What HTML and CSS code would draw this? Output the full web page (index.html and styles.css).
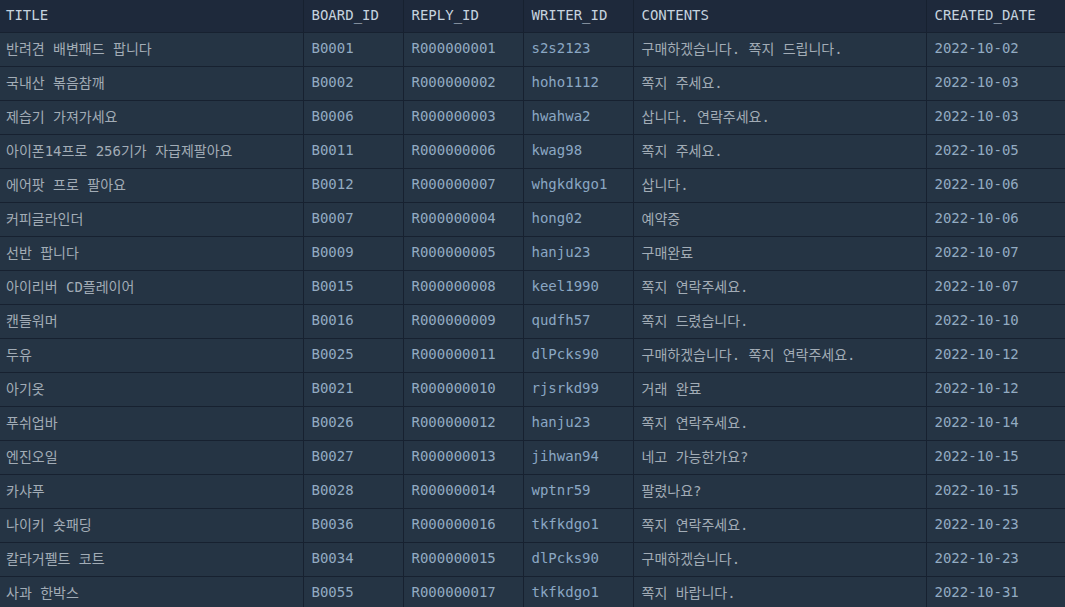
FILE: index.html
```html
<!DOCTYPE html>
<html lang="ko">
<head>
<meta charset="utf-8">
<title>Reply table</title>
<link rel="stylesheet" href="styles.css">
</head>
<body>
<table class="grid">
  <colgroup>
    <col class="c-title"><col class="c-board"><col class="c-reply"><col class="c-writer"><col class="c-contents"><col class="c-date">
  </colgroup>
  <thead>
    <tr><th>TITLE</th><th>BOARD_ID</th><th>REPLY_ID</th><th>WRITER_ID</th><th>CONTENTS</th><th>CREATED_DATE</th></tr>
  </thead>
  <tbody>
    <tr><td class="ko">반려견 배변패드 팝니다</td><td>B0001</td><td>R000000001</td><td class="w">s2s2123</td><td class="ko">구매하겠습니다. 쪽지 드립니다.</td><td>2022-10-02</td></tr>
    <tr><td class="ko">국내산 볶음참깨</td><td>B0002</td><td>R000000002</td><td class="w">hoho1112</td><td class="ko">쪽지 주세요.</td><td>2022-10-03</td></tr>
    <tr><td class="ko">제습기 가져가세요</td><td>B0006</td><td>R000000003</td><td class="w">hwahwa2</td><td class="ko">삽니다. 연락주세요.</td><td>2022-10-03</td></tr>
    <tr><td class="ko">아이폰14프로 256기가 자급제팔아요</td><td>B0011</td><td>R000000006</td><td class="w">kwag98</td><td class="ko">쪽지 주세요.</td><td>2022-10-05</td></tr>
    <tr><td class="ko">에어팟 프로 팔아요</td><td>B0012</td><td>R000000007</td><td class="w">whgkdkgo1</td><td class="ko">삽니다.</td><td>2022-10-06</td></tr>
    <tr><td class="ko">커피글라인더</td><td>B0007</td><td>R000000004</td><td class="w">hong02</td><td class="ko">예약중</td><td>2022-10-06</td></tr>
    <tr><td class="ko">선반 팝니다</td><td>B0009</td><td>R000000005</td><td class="w">hanju23</td><td class="ko">구매완료</td><td>2022-10-07</td></tr>
    <tr><td class="ko">아이리버 CD플레이어</td><td>B0015</td><td>R000000008</td><td class="w">keel1990</td><td class="ko">쪽지 연락주세요.</td><td>2022-10-07</td></tr>
    <tr><td class="ko">캔들워머</td><td>B0016</td><td>R000000009</td><td class="w">qudfh57</td><td class="ko">쪽지 드렸습니다.</td><td>2022-10-10</td></tr>
    <tr><td class="ko">두유</td><td>B0025</td><td>R000000011</td><td class="w">dlPcks90</td><td class="ko">구매하겠습니다. 쪽지 연락주세요.</td><td>2022-10-12</td></tr>
    <tr><td class="ko">아기옷</td><td>B0021</td><td>R000000010</td><td class="w">rjsrkd99</td><td class="ko">거래 완료</td><td>2022-10-12</td></tr>
    <tr><td class="ko">푸쉬업바</td><td>B0026</td><td>R000000012</td><td class="w">hanju23</td><td class="ko">쪽지 연락주세요.</td><td>2022-10-14</td></tr>
    <tr><td class="ko">엔진오일</td><td>B0027</td><td>R000000013</td><td class="w">jihwan94</td><td class="ko">네고 가능한가요?</td><td>2022-10-15</td></tr>
    <tr><td class="ko">카샤푸</td><td>B0028</td><td>R000000014</td><td class="w">wptnr59</td><td class="ko">팔렸나요?</td><td>2022-10-15</td></tr>
    <tr><td class="ko">나이키 숏패딩</td><td>B0036</td><td>R000000016</td><td class="w">tkfkdgo1</td><td class="ko">쪽지 연락주세요.</td><td>2022-10-23</td></tr>
    <tr><td class="ko">칼라거펠트 코트</td><td>B0034</td><td>R000000015</td><td class="w">dlPcks90</td><td class="ko">구매하겠습니다.</td><td>2022-10-23</td></tr>
    <tr><td class="ko">사과 한박스</td><td>B0055</td><td>R000000017</td><td class="w">tkfkdgo1</td><td class="ko">쪽지 바랍니다.</td><td>2022-10-31</td></tr>
  </tbody>
</table>
</body>
</html>
```

FILE: styles.css
```css
html, body {
  margin: 0;
  padding: 0;
  background: #253444;
  overflow: hidden;
}
.grid {
  width: 1065px;
  table-layout: fixed;
  border-collapse: collapse;
  font-family: "DejaVu Sans Mono", "Noto Sans CJK KR", monospace;
  font-size: 14px;
}
.c-title { width: 303px; }
.c-board { width: 100px; }
.c-reply { width: 120px; }
.c-writer { width: 110px; }
.c-contents { width: 293px; }
.c-date { width: 139px; }
.grid th, .grid td {
  border: 1px solid #172130;
  padding: 0 8px;
  text-align: left;
  white-space: nowrap;
  overflow: hidden;
}
.grid th:first-child, .grid td:first-child { border-left: none; padding-left: 6px; }
.grid th:last-child, .grid td:last-child { border-right: none; }
.grid thead tr { background: #1e293b; }
.grid th {
  height: 30px;
  padding-bottom: 2px;
  border-top: none;
  font-weight: normal;
  color: #c6d3df;
}
.grid td {
  height: 30px;
  padding-bottom: 3px;
  color: #93abc2;
}
.grid td.ko { color: #a2acb6; }
.grid td.w { color: #8ba7c3; }
```
